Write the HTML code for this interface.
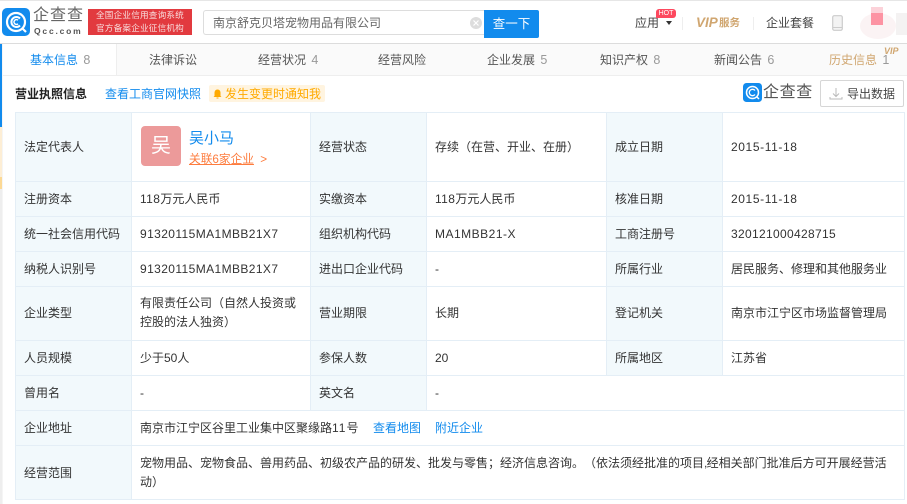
<!DOCTYPE html>
<html lang="zh"><head><meta charset="utf-8">
<style>
html,body{margin:0;padding:0;background:#fff}
body{width:907px;height:504px;overflow:hidden;position:relative;font-family:"Liberation Sans","Noto Sans CJK SC",sans-serif;font-size:12px;color:#333;text-spacing-trim:space-all}
.a{position:absolute;white-space:nowrap}
.l{position:absolute;background:#e4eef6}
.b{position:absolute;background:#f2f9fc}
.t{position:absolute;white-space:nowrap;line-height:20px;font-size:12px;color:#333}
.n{letter-spacing:.4px}
.d{letter-spacing:.6px}
.tab{position:absolute;top:44px;height:31px;line-height:32px;font-size:12px;color:#555;white-space:nowrap}
.tab i{font-style:normal;color:#999;font-size:12.5px;margin-left:2px}
</style></head><body>
<!-- header -->
<div class="a" style="left:0;top:0;width:907px;height:1px;background:#e6e6e6"></div>
<div class="a" style="left:0;top:43px;width:907px;height:1px;background:#dcdcdc"></div>
<svg class="a" style="left:2px;top:8px" width="28" height="28" viewBox="0 0 28 28">
<rect width="28" height="28" rx="5" fill="#128bed"/>
<circle cx="14" cy="14" r="9" fill="none" stroke="#fff" stroke-width="2.2"/>
<path d="M18 10.5a5 5 0 1 0 0 7" fill="none" stroke="#fff" stroke-width="2"/>
<path d="M16 12.2a2.4 2.4 0 1 0 0 3.6" fill="none" stroke="#fff" stroke-width="1.5"/>
<path d="M20 20l4 4" stroke="#fff" stroke-width="2.2"/>
</svg>
<div class="a" style="left:33px;top:5px;font-size:16px;line-height:22px;color:#666;letter-spacing:1px">企查查</div>
<div class="a" style="left:34px;top:26px;font-size:8.5px;line-height:11px;color:#555;letter-spacing:1.800px;font-weight:bold">Qcc.com</div>
<div class="a" style="left:88px;top:9px;width:104px;height:26px;background:#e23a3f;color:#f8dcdc;font-size:8.6px;line-height:13px;text-align:center;letter-spacing:.2px">全国企业信用查询系统<br>官方备案企业征信机构</div>
<div class="a" style="left:203px;top:10px;width:281px;height:25px;border:1px solid #ddd;border-right:0;border-radius:3px 0 0 3px;box-sizing:border-box"></div>
<div class="a" style="left:213px;top:13px;font-size:12px;line-height:20px;color:#666">南京舒克贝塔宠物用品有限公司</div>
<svg class="a" style="left:470px;top:17px" width="12" height="12" viewBox="0 0 12 12"><circle cx="6" cy="6" r="6" fill="#ddd"/><path d="M3.5 3.5l5 5M8.500 3.500l-5 5" stroke="#fff" stroke-width="1.200"/></svg>
<div class="a" style="left:484px;top:10px;width:55px;height:28px;background:#128bed;color:#fff;font-size:12.500px;line-height:28px;text-align:center;border-radius:0 2px 2px 0">查一下</div>
<div class="a" style="left:635px;top:13px;font-size:12px;line-height:20px;color:#444">应用</div>
<div class="a" style="left:666px;top:21px;width:0;height:0;border:3.500px solid transparent;border-top:4px solid #333"></div>
<div class="a" style="left:656px;top:9px;width:20px;height:9px;background:#fd485e;border-radius:3px 3px 3px 0;color:#fff;font-size:7px;line-height:9px;text-align:center">HOT</div>
<div class="a" style="left:682px;top:17px;width:1px;height:13px;background:#eee"></div>
<div class="a" style="left:696px;top:14px;font-size:13.500px;line-height:18px;color:#d0a670;font-weight:bold;font-style:italic">VIP</div>
<div class="a" style="left:719px;top:14px;font-size:10.500px;line-height:18px;color:#d0a670;font-weight:bold">服务</div>
<div class="a" style="left:753px;top:17px;width:1px;height:13px;background:#eee"></div>
<div class="a" style="left:766px;top:13px;font-size:12px;line-height:20px;color:#444">企业套餐</div>
<svg class="a" style="left:832px;top:15px" width="11" height="16" viewBox="0 0 11 16"><rect x=".7" y=".7" width="9.600" height="14.600" rx="1.500" fill="#f3f3f3" stroke="#ccc" stroke-width="1.200"/><path d="M1 12.500h9" stroke="#ccc"/></svg>
<div class="a" style="left:860px;top:13px;width:36px;height:26px;border-radius:50%;background:#fbf3f4"></div>
<div class="a" style="left:871px;top:7px;width:12px;height:6px;background:#fcd2d9"></div>
<div class="a" style="left:871px;top:13px;width:12px;height:12px;background:#fd93a3"></div>
<div class="a" style="left:896px;top:13px;width:11px;height:22px;background:#f4f2f2"></div>
<!-- tabs -->
<div class="a" style="left:116px;top:44px;width:791px;height:31px;background:#fafafa"></div>
<div class="a" style="left:3px;top:75px;width:904px;height:1px;background:#eee"></div>
<div class="a" style="left:116px;top:44px;width:1px;height:31px;background:#eee"></div>
<div class="tab" style="left:30px;color:#128bed">基本信息 <i>8</i></div>
<div class="tab" style="left:149px">法律诉讼</div>
<div class="tab" style="left:258px">经营状况 <i>4</i></div>
<div class="tab" style="left:378px">经营风险</div>
<div class="tab" style="left:487px">企业发展 <i>5</i></div>
<div class="tab" style="left:600px">知识产权 <i>8</i></div>
<div class="tab" style="left:714px">新闻公告 <i>6</i></div>
<div class="tab" style="left:829px;color:#d0a670">历史信息 <i>1</i></div>
<div class="a" style="left:884px;top:46px;font-size:9px;line-height:10px;color:#d0a670;font-weight:bold;font-style:italic">VIP</div>
<!-- left sliver -->
<div class="a" style="left:0;top:44px;width:2px;height:83px;background:#128bed"></div>
<div class="a" style="left:0;top:127px;width:2px;height:50px;background:#fdeed5"></div>
<div class="a" style="left:0;top:177px;width:2px;height:12px;background:#fcd995"></div>
<div class="a" style="left:0;top:189px;width:2px;height:315px;background:#eee"></div>
<div class="a" style="left:2px;top:44px;width:1px;height:460px;background:#f5f5f5"></div>
<!-- section bar -->
<div class="a" style="left:15px;top:84px;font-size:12px;line-height:20px;color:#222;font-weight:bold">营业执照信息</div>
<div class="a" style="left:105px;top:84px;font-size:12px;line-height:20px;color:#128bed">查看工商官网快照</div>
<div class="a" style="left:209px;top:85px;width:116px;height:17px;background:#fff4e0;border-radius:2px"></div>
<svg class="a" style="left:213px;top:89px" width="9" height="10" viewBox="0 0 9 10"><path d="M4.500 .5C2.500 .5 1.500 2 1.500 4v3L.5 8h8l-1-1V4C7.500 2 6.500 .5 4.500 .5zM3.500 8.500h2v1h-2z" fill="#ffaa00"/></svg>
<div class="a" style="left:225px;top:84px;font-size:12px;line-height:20px;color:#ffaa00">发生变更时通知我</div>
<svg class="a" style="left:743px;top:83px" width="19" height="19" viewBox="0 0 19 19"><rect width="19" height="19" rx="3.500" fill="#128bed"/><circle cx="9.500" cy="9.500" r="6" fill="none" stroke="#fff" stroke-width="1.500"/><path d="M12 7.500a3.200 3.200 0 1 0 0 4" fill="none" stroke="#fff" stroke-width="1.300"/><path d="M13.500 13.500l2.500 2.500" stroke="#fff" stroke-width="1.500"/></svg>
<div class="a" style="left:763px;top:82px;font-size:16px;line-height:22px;color:#555;letter-spacing:.6px">企查查</div>
<div class="a" style="left:820px;top:80px;width:84px;height:27px;box-sizing:border-box;border:1px solid #d6d6d6;border-radius:2px"></div>
<svg class="a" style="left:829px;top:87px" width="14" height="13" viewBox="0 0 14 13"><path d="M7 1v8M4 6.500L7 9.500l3-3M1 10v2h12v-2" fill="none" stroke="#bbb" stroke-width="1"/></svg>
<div class="a" style="left:847px;top:84px;font-size:12px;line-height:20px;color:#444">导出数据</div>
<!-- table backgrounds -->
<div class="b" style="left:15px;top:112px;width:116px;height:387px"></div>
<div class="b" style="left:310px;top:112px;width:116px;height:298px"></div>
<div class="b" style="left:606px;top:112px;width:116px;height:263px"></div>
<!-- horizontal lines -->
<div class="l" style="left:15px;top:112px;width:890px;height:1px"></div>
<div class="l" style="left:15px;top:181px;width:890px;height:1px"></div>
<div class="l" style="left:15px;top:216px;width:890px;height:1px"></div>
<div class="l" style="left:15px;top:251px;width:890px;height:1px"></div>
<div class="l" style="left:15px;top:286px;width:890px;height:1px"></div>
<div class="l" style="left:15px;top:340px;width:890px;height:1px"></div>
<div class="l" style="left:15px;top:375px;width:890px;height:1px"></div>
<div class="l" style="left:15px;top:410px;width:890px;height:1px"></div>
<div class="l" style="left:15px;top:445px;width:890px;height:1px"></div>
<div class="l" style="left:15px;top:499px;width:890px;height:1px"></div>
<!-- vertical lines -->
<div class="l" style="left:15px;top:112px;width:1px;height:388px"></div>
<div class="l" style="left:131px;top:112px;width:1px;height:388px"></div>
<div class="l" style="left:310px;top:112px;width:1px;height:299px"></div>
<div class="l" style="left:426px;top:112px;width:1px;height:299px"></div>
<div class="l" style="left:606px;top:112px;width:1px;height:264px"></div>
<div class="l" style="left:722px;top:112px;width:1px;height:264px"></div>
<div class="l" style="left:904px;top:112px;width:1px;height:388px"></div>
<!-- row 1 -->
<div class="t" style="left:24px;top:137px">法定代表人</div>
<div class="a" style="left:141px;top:126px;width:40px;height:40px;background:#ec9a9a;border-radius:4px;color:#fff;font-size:20px;line-height:40px;text-align:center">吴</div>
<div class="a" style="left:189px;top:129px;font-size:15px;line-height:20px;color:#128bed">吴小马</div>
<div class="a" style="left:189px;top:151px;font-size:11.700px;line-height:18px;color:#fd7c3e"><span style="text-decoration:underline">关联6家企业</span> <span style="margin-left:3px">&gt;</span></div>
<div class="t" style="left:319px;top:137px">经营状态</div>
<div class="t" style="left:435px;top:137px">存续（在营、开业、在册）</div>
<div class="t" style="left:615px;top:137px">成立日期</div>
<div class="t d" style="left:731px;top:137px">2015-11-18</div>
<!-- row 2 -->
<div class="t" style="left:24px;top:189px">注册资本</div>
<div class="t" style="left:140px;top:189px"><span class="n">118</span>万元人民币</div>
<div class="t" style="left:319px;top:189px">实缴资本</div>
<div class="t" style="left:435px;top:189px"><span class="n">118</span>万元人民币</div>
<div class="t" style="left:615px;top:189px">核准日期</div>
<div class="t d" style="left:731px;top:189px">2015-11-18</div>
<!-- row 3 -->
<div class="t" style="left:24px;top:224px">统一社会信用代码</div>
<div class="t n" style="left:140px;top:224px">91320115MA1MBB21X7</div>
<div class="t" style="left:319px;top:224px">组织机构代码</div>
<div class="t" style="left:435px;top:224px;letter-spacing:.5px">MA1MBB21-X</div>
<div class="t" style="left:615px;top:224px">工商注册号</div>
<div class="t" style="left:731px;top:224px;letter-spacing:.33px">320121000428715</div>
<!-- row 4 -->
<div class="t" style="left:24px;top:259px">纳税人识别号</div>
<div class="t n" style="left:140px;top:259px">91320115MA1MBB21X7</div>
<div class="t" style="left:319px;top:259px">进出口企业代码</div>
<div class="t" style="left:435px;top:259px">-</div>
<div class="t" style="left:615px;top:259px">所属行业</div>
<div class="t" style="left:731px;top:259px">居民服务、修理和其他服务业</div>
<!-- row 5 -->
<div class="t" style="left:24px;top:303px">企业类型</div>
<div class="t" style="left:140px;top:294px;line-height:19px">有限责任公司（自然人投资或<br>控股的法人独资）</div>
<div class="t" style="left:319px;top:303px">营业期限</div>
<div class="t" style="left:435px;top:303px">长期</div>
<div class="t" style="left:615px;top:303px">登记机关</div>
<div class="t" style="left:731px;top:303px">南京市江宁区市场监督管理局</div>
<!-- row 6 -->
<div class="t" style="left:24px;top:348px">人员规模</div>
<div class="t" style="left:140px;top:348px">少于50人</div>
<div class="t" style="left:319px;top:348px">参保人数</div>
<div class="t" style="left:435px;top:348px">20</div>
<div class="t" style="left:615px;top:348px">所属地区</div>
<div class="t" style="left:731px;top:348px">江苏省</div>
<!-- row 7 -->
<div class="t" style="left:24px;top:383px">曾用名</div>
<div class="t" style="left:140px;top:383px">-</div>
<div class="t" style="left:319px;top:383px">英文名</div>
<div class="t" style="left:435px;top:383px">-</div>
<!-- row 8 -->
<div class="t" style="left:24px;top:418px">企业地址</div>
<div class="t" style="left:140px;top:418px">南京市江宁区谷里工业集中区聚缘路<span style="letter-spacing:1px">11</span>号</div>
<div class="t" style="left:373px;top:418px;color:#128bed">查看地图</div>
<div class="t" style="left:435px;top:418px;color:#128bed">附近企业</div>
<!-- row 9 -->
<div class="t" style="left:24px;top:463px">经营范围</div>
<div class="t" style="left:140px;top:453px">宠物用品、宠物食品、兽用药品、初级农产品的研发、批发与零售；经济信息咨询。（依法须经批准的项目<span style="letter-spacing:-.8px">,</span>经相关部门批准后方可开展经营活</div>
<div class="t" style="left:140px;top:472px">动）</div>
</body></html>
